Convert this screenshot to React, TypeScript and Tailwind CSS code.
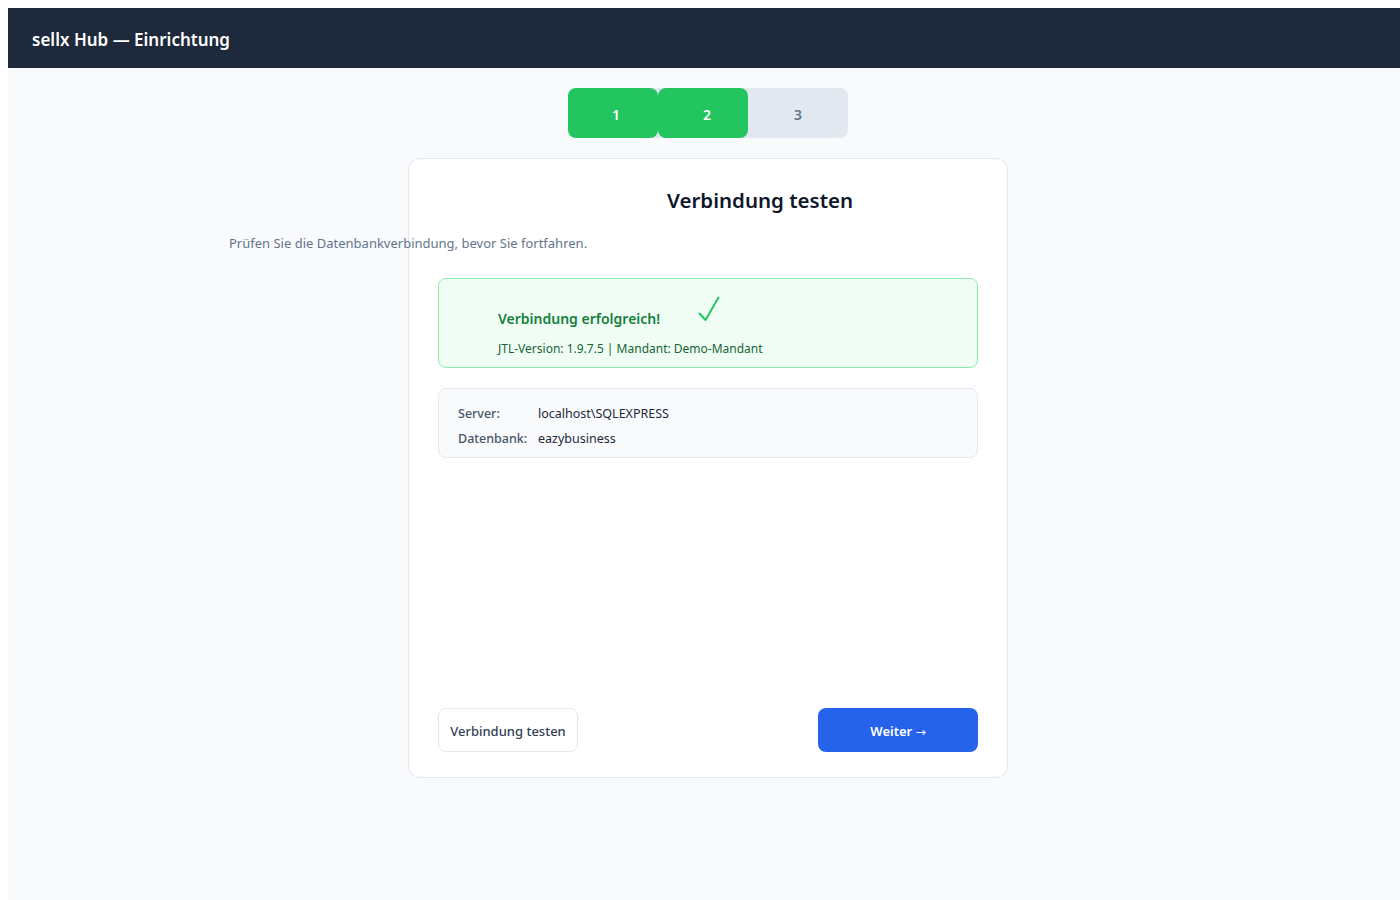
export default function App() {
  return (
    <div className="bg-white pl-2 pt-2 overflow-hidden h-screen font-['Noto_Sans',sans-serif]">
      <div className="w-screen h-screen bg-[#f8fafc]">
        <header className="h-[60px] bg-[#1e293b] flex items-center px-6 pt-[4px]">
          <h1 className="text-white text-[17px] font-semibold">sellx Hub — Einrichtung</h1>
        </header>

        <div className="flex flex-col items-center pt-5">
          <div className="flex w-[280px] h-[50px] bg-[#e2e8f0] rounded-lg">
            <div className="w-[90px] pl-[6px] pt-[3px] bg-[#22c55e] rounded-lg flex items-center justify-center text-white text-sm font-semibold">1</div>
            <div className="w-[90px] pl-[8px] pt-[3px] bg-[#22c55e] rounded-lg flex items-center justify-center text-white text-sm font-semibold">2</div>
            <div className="flex-1 pt-[3px] flex items-center justify-center text-[#64748b] text-sm font-semibold">3</div>
          </div>

          <div className="mt-5 w-[600px] h-[620px] bg-white border border-[#e2e8f0] rounded-xl px-[29px] pt-[26px] pb-[25px] flex flex-col">
            <h2 className="pl-[104px] text-center text-[20.5px] font-semibold text-[#0f172a]">Verbindung testen</h2>
            <p className="ml-[-209px] mt-[18px] text-[13px] text-[#64748b] whitespace-nowrap">Prüfen Sie die Datenbankverbindung, bevor Sie fortfahren.</p>

            <div className="mt-[25px] h-[90px] bg-[#f0fdf4] border border-[#86efac] rounded-lg px-[59px] pt-[21px]">
              <div className="flex items-end h-[30px]">
                <span className="text-[14px] font-semibold text-[#15803d] leading-[22px]">Verbindung erfolgreich!</span>
                <svg className="ml-[38px] mb-[8px]" width="22" height="26" viewBox="0 0 22 26" fill="none">
                  <path d="M1.5 17.5 L7.5 24 L20.5 1.5" stroke="#22c55e" strokeWidth="2" strokeLinecap="round" strokeLinejoin="round" />
                </svg>
              </div>
              <p className="mt-[10px] text-[12px] text-[#166534]">JTL-Version: 1.9.7.5 | Mandant: Demo-Mandant</p>
            </div>

            <div className="mt-5 h-[70px] bg-[#f8fafc] border border-[#e2e8f0] rounded-lg px-[19px] pt-[12px] text-[12.5px] leading-[25px]">
              <div className="flex">
                <span className="w-20 font-medium text-[#475569]">Server:</span>
                <span className="text-[#1e293b]">localhost\SQLEXPRESS</span>
              </div>
              <div className="flex">
                <span className="w-20 font-medium text-[#475569]">Datenbank:</span>
                <span className="text-[#1e293b]">eazybusiness</span>
              </div>
            </div>

            <div className="mt-auto flex justify-between">
              <button className="h-[44px] w-[140px] pt-[4px] bg-white border border-[#e2e8f0] rounded-lg text-[13px] font-medium text-[#334155]">Verbindung testen</button>
              <button className="h-[44px] w-[160px] pt-[4px] bg-[#2563eb] rounded-lg text-[13px] font-semibold text-white">
                Weiter <span className="font-['DejaVu_Sans',sans-serif] font-normal text-[12px]">→</span>
              </button>
            </div>
          </div>
        </div>
      </div>
    </div>
  );
}
